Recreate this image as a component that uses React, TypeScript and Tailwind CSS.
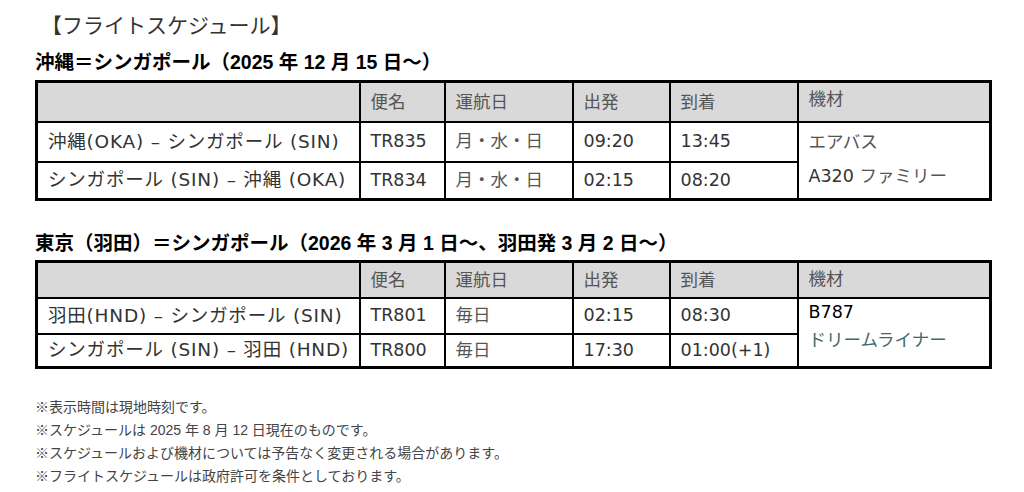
import React from 'react';

const FONT = "'Liberation Sans', 'Noto Sans CJK JP', sans-serif";
const CELL_FONT = "'DejaVu Sans', 'Noto Sans CJK JP', sans-serif";

type Row = { route: string; flight: string; days: string; dep: string; arr: string };

interface TableProps {
  headH: string;
  rowH: [string, string];
  rows: Row[];
  aircraft: React.ReactNode;
}

function ScheduleTable({ headH, rowH, rows, aircraft }: TableProps) {
  const cell = 'border-2 border-black px-[10px] text-left align-middle font-normal';
  return (
    <table
      className="w-[954px] table-fixed border-collapse border-[3px] border-black text-[17.5px] text-[#333]"
      style={{ fontFamily: CELL_FONT }}
    >
      <colgroup>
        <col className="w-[323px]" />
        <col className="w-[85px]" />
        <col className="w-[128px]" />
        <col className="w-[97px]" />
        <col className="w-[128px]" />
        <col className="w-[193px]" />
      </colgroup>
      <thead>
        <tr className={`${headH} bg-[#d9d9d9] text-[#555]`}>
          <th className={cell}></th>
          <th className={cell}>便名</th>
          <th className={cell}>運航日</th>
          <th className={cell}>出発</th>
          <th className={cell}>到着</th>
          <th className={`${cell} align-top pt-[3px]`}>機材</th>
        </tr>
      </thead>
      <tbody>
        {rows.map((r, i) => (
          <tr key={r.flight} className={rowH[i]}>
            <td className={`${cell} whitespace-nowrap text-[18.5px] tracking-[0.8px]`}>{r.route}</td>
            <td className={cell}>{r.flight}</td>
            <td className={`${cell} text-[#555]`}>{r.days}</td>
            <td className={cell}>{r.dep}</td>
            <td className={cell}>{r.arr}</td>
            {i === 0 && (
              <td rowSpan={2} className={`${cell} align-top`}>
                {aircraft}
              </td>
            )}
          </tr>
        ))}
      </tbody>
    </table>
  );
}

const OKA: Row[] = [
  { route: '沖縄(OKA) – シンガポール (SIN)', flight: 'TR835', days: '月・水・日', dep: '09:20', arr: '13:45' },
  { route: 'シンガポール (SIN) – 沖縄 (OKA)', flight: 'TR834', days: '月・水・日', dep: '02:15', arr: '08:20' },
];

const HND: Row[] = [
  { route: '羽田(HND) – シンガポール (SIN)', flight: 'TR801', days: '毎日', dep: '02:15', arr: '08:30' },
  { route: 'シンガポール (SIN) – 羽田 (HND)', flight: 'TR800', days: '毎日', dep: '17:30', arr: '01:00(+1)' },
];

export default function App() {
  return (
    <div className="w-[1024px] h-[492px] bg-white pl-[35px] overflow-hidden" style={{ fontFamily: FONT }}>
      <h1 className="pt-[12px] pl-[6px] text-[21px] leading-[28px] text-[#333] font-normal">【フライトスケジュール】</h1>

      <h2 className="mt-[9px] text-[19.5px] leading-[26px] font-bold text-black">
        沖縄＝シンガポール（2025 年 12 月 15 日～）
      </h2>
      <div className="mt-[5px]">
        <ScheduleTable
          headH="h-[40px]"
          rowH={['h-[40px]', 'h-[38px]']}
          rows={OKA}
          aircraft={
            <div className="pt-[2px] leading-[34px]">
              <div className="text-[#555]">エアバス</div>
              <div>A320 <span className="text-[#555]">ファミリー</span></div>
            </div>
          }
        />
      </div>

      <h2 className="mt-[29px] text-[19.5px] leading-[26px] font-bold text-black">
        東京（羽田）＝シンガポール（2026 年 3 月 1 日～、羽田発 3 月 2 日～）
      </h2>
      <div className="mt-[4px]">
        <ScheduleTable
          headH="h-[36px]"
          rowH={['h-[36px]', 'h-[34px]']}
          rows={HND}
          aircraft={
            <div className="leading-[28px] -mt-[1px]">
              <div className="text-black">B787</div>
              <div className="text-[#3d6b6b]">ドリームライナー</div>
            </div>
          }
        />
      </div>

      <div className="mt-[27px] text-[14px] leading-[23px] text-[#444]">
        <p>※表示時間は現地時刻です。</p>
        <p>※スケジュールは 2025 年 8 月 12 日現在のものです。</p>
        <p>※スケジュールおよび機材については予告なく変更される場合があります。</p>
        <p>※フライトスケジュールは政府許可を条件としております。</p>
      </div>
    </div>
  );
}
